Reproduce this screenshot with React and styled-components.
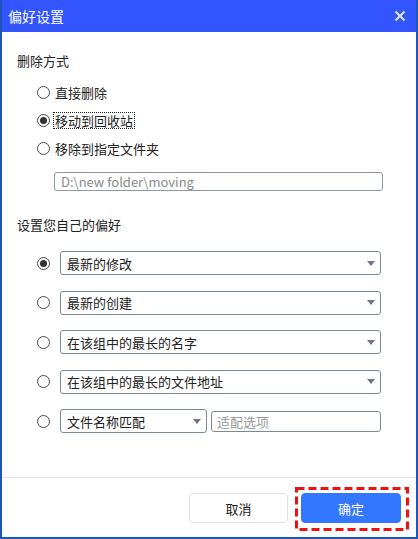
import React from "react";
import styled, { createGlobalStyle } from "styled-components";

const Global = createGlobalStyle`
  html, body { margin: 0; padding: 0; background: #fff; }
  body { font-family: "Noto Sans CJK SC", "Noto Sans", sans-serif; }
  * { box-sizing: border-box; }
`;

const Window = styled.div`
  width: 418px;
  height: 539px;
  border: 2px solid #1d56b8;
  border-top: none;
  display: flex;
  flex-direction: column;
  background: #fff;
`;

const TitleBar = styled.div`
  height: 32px;
  flex: none;
  background: #3355ff;
  display: flex;
  align-items: center;
  justify-content: space-between;
  padding: 0 10px 0 6px;
  color: #fff;
  font-size: 14px;
`;

const Close = styled.button`
  border: none;
  background: none;
  padding: 0;
  width: 12px;
  height: 12px;
  display: flex;
  cursor: pointer;
`;

const Body = styled.div`
  flex: 1;
  padding: 21px 0 0 15px;
  display: flex;
  flex-direction: column;
`;

const Heading = styled.div`
  font-size: 13px;
  line-height: 16px;
  color: #222;
  height: 16px;
  margin-bottom: ${(p) => p.$mb}px;
`;

const Group = styled.div`
  display: flex;
  flex-direction: column;
  padding-left: 20px;
`;

const RadioRow = styled.label`
  height: 28px;
  display: flex;
  align-items: center;
  gap: 4px;
  font-size: 13px;
  color: #222;
`;

const Circle = styled.span`
  width: 13px;
  height: 13px;
  border-radius: 50%;
  border: 1px solid #4b4b4b;
  display: flex;
  align-items: center;
  justify-content: center;
  flex: none;
  background: #fff;
  &::after {
    content: "";
    width: 7px;
    height: 7px;
    border-radius: 50%;
    background: ${(p) => (p.$on ? "#333" : "transparent")};
  }
`;

const LabelText = styled.span`
  line-height: 15px;
  padding: 0 1px;
  outline: ${(p) => (p.$focus ? "1px dotted #222" : "none")};
`;

const PathInput = styled.input`
  margin: 10px 0 0 37px;
  width: 329px;
  height: 19px;
  flex: none;
  border: 1px solid #8f99a6;
  border-radius: 3px;
  padding: 0 6px;
  font-family: inherit;
  font-size: 13px;
  color: #8a8a8a;
  outline: none;
`;

const Spacer = styled.div`
  height: ${(p) => p.$h}px;
  flex: none;
`;

const PrefList = styled.div`
  display: flex;
  flex-direction: column;
  gap: 15.5px;
  padding-left: 20px;
`;

const PrefRow = styled.div`
  height: 24px;
  display: flex;
  align-items: center;
`;

const RadioSlot = styled.div`
  width: 23px;
  display: flex;
  align-items: center;
`;

const Select = styled.div`
  width: ${(p) => p.$w}px;
  height: 24px;
  border: 1px solid #7d8a9c;
  border-radius: 3px;
  display: flex;
  align-items: center;
  justify-content: space-between;
  padding: 0 5px 0 6px;
  font-size: 13px;
  color: #222;
`;

const Arrow = styled.span`
  width: 0;
  height: 0;
  border-left: 4px solid transparent;
  border-right: 4px solid transparent;
  border-top: 5px solid #6b7789;
`;

const SmallInput = styled.input`
  margin-left: 4px;
  width: 170px;
  height: 21px;
  border: 1px solid #7d8a9c;
  border-radius: 3px;
  padding: 0 5px;
  font-family: inherit;
  font-size: 13px;
  outline: none;
  &::placeholder { color: #9a9a9a; }
`;

const Footer = styled.div`
  height: 60px;
  flex: none;
  border-top: 1px solid #e1e4ea;
  display: flex;
  justify-content: flex-end;
  align-items: flex-start;
  padding: 15px 15px 0 0;
  gap: 13px;
`;

const Button = styled.button`
  width: ${(p) => p.$w}px;
  height: 30px;
  border-radius: 4px;
  font-family: inherit;
  font-size: 13px;
  cursor: pointer;
  border: 1px solid ${(p) => (p.$primary ? "#3377ff" : "#dde2ea")};
  background: ${(p) => (p.$primary ? "#3377ff" : "#fff")};
  color: ${(p) => (p.$primary ? "#fff" : "#222")};
`;

const Highlight = styled.div`
  position: relative;
`;

const Dash = styled.svg`
  position: absolute;
  left: -6px;
  top: -6px;
  width: 114px;
  height: 44px;
  pointer-events: none;
`;

const prefs = [
  { label: "最新的修改", on: true },
  { label: "最新的创建" },
  { label: "在该组中的最长的名字" },
  { label: "在该组中的最长的文件地址" },
];

export default function App() {
  return (
    <>
      <Global />
      <Window>
        <TitleBar>
          <span>偏好设置</span>
          <Close aria-label="close">
            <svg width="12" height="12" viewBox="0 0 12 12">
              <path d="M1.5 1.5L10.5 10.5M10.5 1.5L1.5 10.5" stroke="#dfe6ff" strokeWidth="2" />
            </svg>
          </Close>
        </TitleBar>
        <Body>
          <Heading $mb={9}>删除方式</Heading>
          <Group>
            <RadioRow>
              <Circle />
              <LabelText>直接删除</LabelText>
            </RadioRow>
            <RadioRow>
              <Circle $on />
              <LabelText $focus>移动到回收站</LabelText>
            </RadioRow>
            <RadioRow>
              <Circle />
              <LabelText>移除到指定文件夹</LabelText>
            </RadioRow>
          </Group>
          <PathInput defaultValue="D:\new folder\moving" />
          <Spacer $h={26} />
          <Heading $mb={18}>设置您自己的偏好</Heading>
          <PrefList>
            {prefs.map((p) => (
              <PrefRow key={p.label}>
                <RadioSlot>
                  <Circle $on={p.on} />
                </RadioSlot>
                <Select $w={321}>
                  <span>{p.label}</span>
                  <Arrow />
                </Select>
              </PrefRow>
            ))}
            <PrefRow>
              <RadioSlot>
                <Circle />
              </RadioSlot>
              <Select $w={147}>
                <span>文件名称匹配</span>
                <Arrow />
              </Select>
              <SmallInput placeholder="适配选项" />
            </PrefRow>
          </PrefList>
        </Body>
        <Footer>
          <Button $w={99}>取消</Button>
          <Highlight>
            <Button $w={100} $primary>确定</Button>
            <Dash viewBox="0 0 114 44">
              <rect x="1.5" y="1.5" width="111" height="41" fill="none" stroke="#ee1111" strokeWidth="3" strokeDasharray="8 4" />
            </Dash>
          </Highlight>
        </Footer>
      </Window>
    </>
  );
}
